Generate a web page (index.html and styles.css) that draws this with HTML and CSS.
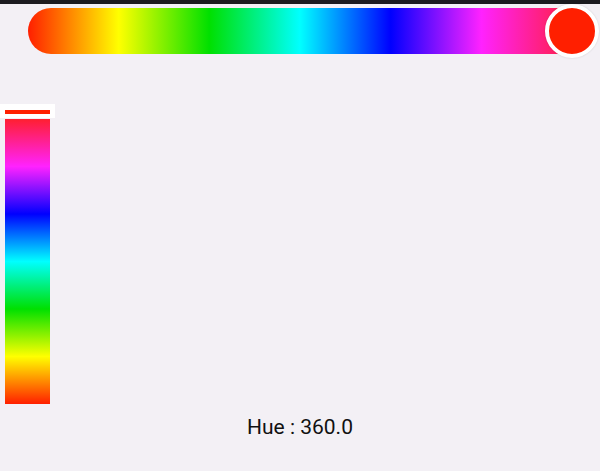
FILE: index.html
```html
<!DOCTYPE html>
<html>
<head>
<meta charset="utf-8">
<link rel="stylesheet" href="styles.css">
</head>
<body>
<div class="statusbar"></div>
<div class="hslider">
  <div class="htrack">
    <div class="hthumb"></div>
  </div>
</div>
<div class="vslider">
  <div class="vindicator"><div class="vline"></div></div>
  <div class="vtrack"></div>
</div>
<div class="label">Hue : 360.0</div>
</body>
</html>
```
FILE: styles.css
```css
html, body {
  margin: 0;
  padding: 0;
  background: #f3f0f5;
  width: 600px;
  height: 471px;
  overflow: hidden;
  font-family: Roboto, "Noto Sans", sans-serif;
}
.statusbar {
  height: 4px;
  background: #1c1b1f;
}
.hslider {
  padding: 4px 0 0 28px;
}
.htrack {
  position: relative;
  width: 544px;
  height: 46px;
  border-radius: 23px 0 0 23px;
  background: linear-gradient(to right,
    #ff1f00 0%, #ffff00 16.67%, #00e000 33.33%, #00ffff 50%,
    #0000ff 66.67%, #ff22ff 83.33%, #ff1f40 100%);
}
.hthumb {
  position: absolute;
  left: calc(100% - 27px);
  top: -4px;
  width: 46px;
  height: 46px;
  border-radius: 50%;
  background: #ff1f00;
  border: 4px solid #ffffff;
  box-shadow: 0 0 2px rgba(0,0,0,0.15);
}
.vslider {
  position: relative;
  margin: 65px 0 0 5px;
  width: 45px;
}
.vtrack {
  height: 285px;
  background: linear-gradient(to bottom,
    #ff1f30 0%, #ff22ff 16.67%, #0000ff 33.33%, #00ffff 50%,
    #00e000 66.67%, #ffff00 83.33%, #ff1f00 100%);
}
.vindicator {
  position: absolute;
  left: -5px;
  top: -15px;
  width: 55px;
  height: 14px;
  background: #ffffff;
}
.vline {
  margin: 6px 0 0 5px;
  width: 45px;
  height: 4px;
  background: #ff1f00;
}
.label {
  margin-top: 11px;
  text-align: center;
  font-size: 21px;
  line-height: 24px;
  color: #111111;
}
```
